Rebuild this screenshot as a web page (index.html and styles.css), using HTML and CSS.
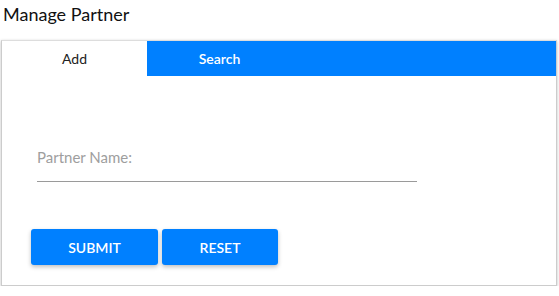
FILE: index.html
```html
<!DOCTYPE html>
<html lang="en">
<head>
    <meta charset="UTF-8">
    <meta name="viewport" content="width=device-width, initial-scale=1.0">
    <title>Manage Partner</title>
    <link rel="stylesheet" href="styles.css">
</head>
<body>
    <h1 class="title">Manage Partner</h1>
    <div class="card">
        <div class="tabs">
            <div class="tab active">Add</div>
            <div class="tab">Search</div>
        </div>
        <form class="form">
            <div class="field">
                <input type="text" id="partnerName" placeholder="Partner Name:">
            </div>
            <div class="actions">
                <button type="submit" class="btn">Submit</button>
                <button type="reset" class="btn">Reset</button>
            </div>
        </form>
    </div>
</body>
</html>
```

FILE: styles.css
```css
body {
    margin: 0;
    padding: 0 2px 0 1px;
    font-family: Lato, "Open Sans", sans-serif;
    background: #fff;
}

.title {
    margin: 0;
    padding-left: 2px;
    font-size: 18px;
    font-weight: 400;
    line-height: 28px;
    color: #111;
}

.card {
    margin-top: 12px;
    height: 246px;
    border: 1px solid #ccc;
    border-top-color: #ddd;
    box-shadow: 0 1px 3px rgba(0, 0, 0, 0.25);
    box-sizing: border-box;
}

.tabs {
    display: flex;
    height: 35px;
    background: #0080ff;
}

.tab {
    width: 145px;
    display: flex;
    align-items: center;
    justify-content: center;
    font-size: 14px;
    font-weight: 600;
    color: #fff;
}

.tab.active {
    background: #fff;
    color: #222;
    font-weight: 400;
}

.form {
    padding: 71px 0 0 29px;
}

.field {
    margin-left: 6px;
    width: 380px;
}

.field input {
    width: 100%;
    box-sizing: border-box;
    border: none;
    border-bottom: 1px solid #9a9a9a;
    padding: 0 0 15px;
    font-family: inherit;
    font-size: 15px;
    color: #333;
    outline: none;
}

.field input::placeholder {
    color: #9e9e9e;
}

.actions {
    display: flex;
    gap: 4px;
    margin-top: 47px;
}

.btn {
    height: 36px;
    border: none;
    border-radius: 3px;
    background: #0080ff;
    color: #fff;
    font-family: inherit;
    font-size: 14px;
    font-weight: 600;
    text-transform: uppercase;
    box-shadow: 0 2px 4px rgba(0, 0, 0, 0.25);
}

.btn[type="submit"] {
    width: 127px;
}

.btn[type="reset"] {
    width: 116px;
}
```
